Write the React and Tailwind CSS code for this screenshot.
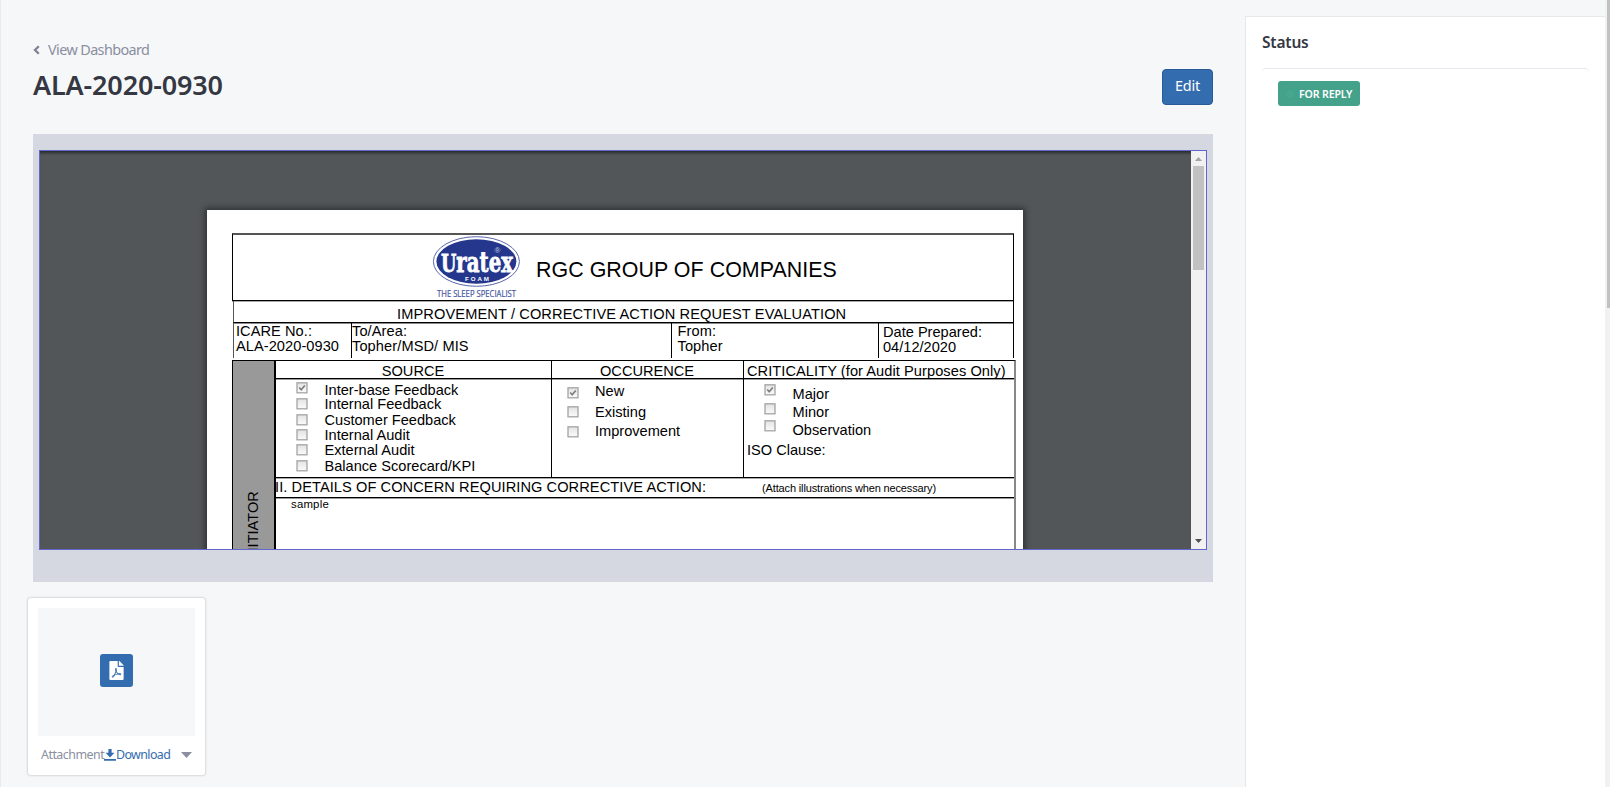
import React from "react";
import { FaFilePdf } from "react-icons/fa";

function Check({ on, className }) {
  return (
    <svg className={"block h-[12px] w-[12px] shrink-0 " + className} viewBox="0 0 12 12">
      <defs>
        <linearGradient id="cb" x1="0" y1="0" x2="0" y2="1">
          <stop offset="0" stopColor="#e2e2e2" />
          <stop offset="1" stopColor="#fbfbfb" />
        </linearGradient>
      </defs>
      <rect x="1" y="0.8" width="10" height="10" fill="url(#cb)" stroke="#a4a4a4" strokeWidth="1.3" />
      {on && <path d="M3.2 5.5 L5.2 7.8 L8.8 3.4" fill="none" stroke="#7c7c7c" strokeWidth="1.6" />}
    </svg>
  );
}

function Logo() {
  return (
    <svg className="block h-[65px] w-[88px] shrink-0 overflow-visible" viewBox="0 0 88 65">
      <ellipse cx="44.4" cy="25.5" rx="43" ry="24.8" fill="#fff" stroke="#5a68ab" strokeWidth="1" />
      <ellipse cx="44.4" cy="25.5" rx="40" ry="22.2" fill="#24378c" />
      <text x="9" y="35.6" textLength="72" lengthAdjust="spacingAndGlyphs" fill="#fff" stroke="#fff" strokeWidth="0.8" fontFamily="DejaVu Serif, serif" fontWeight="700" fontSize="25">U<tspan fontSize="28">ratex</tspan></text>
      <text x="62.4" y="16.8" fill="#c5cbe4" fontFamily="Liberation Sans, sans-serif" fontSize="8">®</text>
      <text x="33" y="45" textLength="24" fill="#fff" fontFamily="Liberation Sans, sans-serif" fontWeight="700" fontSize="6.2">FOAM</text>
      <text x="5" y="60.6" textLength="79" lengthAdjust="spacingAndGlyphs" fill="#4656a0" stroke="#4656a0" strokeWidth="0.2" fontFamily="Open Sans, sans-serif" fontSize="8.8">THE SLEEP SPECIALIST</text>
    </svg>
  );
}

function Report() {
  return (
    <div className="ml-[167px] mt-[59px] h-[500px] w-[816px] shrink-0 bg-white pl-[25px] pt-[23px] font-['Liberation_Sans',Arial,sans-serif] text-[14.6px] leading-[15px] text-black shadow-[0_0_6px_2px_rgba(0,0,0,0.45)]">
      <div className="flex h-[68px] w-[782px] border-x border-b border-t-2 border-black border-t-[#555] pl-[199px] pt-px shadow-[0_1px_0_#aaa]">
        <Logo />
        <div className="pl-[16px] pt-[22px] text-[21.4px] leading-[24px] tracking-[0.04px] whitespace-nowrap">RGC GROUP OF COMPANIES</div>
      </div>
      <div className="ml-px h-[22px] w-[781px] border-b border-l border-r border-black border-l-[#555] pl-[163px] pt-[6px] tracking-[0.12px] whitespace-nowrap shadow-[0_1px_0_#888]">
        IMPROVEMENT / CORRECTIVE ACTION REQUEST EVALUATION
      </div>
      <div className="ml-px flex h-[35px] w-[781px] border-x border-black border-l-[#555]">
        <div className="w-[118px] border-r border-black pl-[2px] pt-px">
          <div className="tracking-[0.06px]">ICARE No.:</div>
          <div className="tracking-[0.06px]">ALA-2020-0930</div>
        </div>
        <div className="w-[320px] border-r border-black pt-px tracking-[0.1px]">
          <div>To/Area:</div>
          <div>Topher/MSD/ MIS</div>
        </div>
        <div className="w-[207px] border-r border-black pl-[5.5px] pt-px tracking-[0.1px]">
          <div>From:</div>
          <div>Topher</div>
        </div>
        <div className="pl-[4px] pt-[2px]">
          <div>Date Prepared:</div>
          <div>04/12/2020</div>
        </div>
      </div>
      <div className="mt-[2px] flex h-[300px] w-[784px] border-l border-r-2 border-t border-black border-r-[#888]">
        <div className="w-[43px] shrink-0 border-r-2 border-black bg-[#999] pl-[12px] pt-[130px]">
          <div className="h-[80px] rotate-180 [writing-mode:vertical-rl] leading-[17px] text-right">INITIATOR</div>
        </div>
        <div className="grow">
          <div className="flex h-[18px] border-b border-black pt-[3px] shadow-[0_1px_0_#999]">
            <div className="w-[276px] pr-[2px] text-center">SOURCE</div>
            <div className="w-[192px] pl-[48px]">OCCURENCE</div>
            <div className="pl-[3px] tracking-[0.07px] whitespace-nowrap">CRITICALITY (for Audit Purposes Only)</div>
          </div>
          <div className="-mt-[18px] flex h-[117px] border-b border-black pt-[18px] shadow-[0_1px_0_#aaa]">
            <div className="-mt-[18px] flex w-[276px] border-r border-black pl-[20px] pt-[21px]">
              <div className="w-[28px]">
                <Check on className="" />
                <Check className="mt-[4px]" />
                <Check className="mt-[4px]" />
                <Check className="mt-[3px]" />
                <Check className="mt-[3px]" />
                <Check className="mt-[4px]" />
              </div>
              <div className="pl-[0.5px] pt-px whitespace-nowrap">
                <div className="h-[14px]">Inter-base Feedback</div>
                <div className="h-[16px]">Internal Feedback</div>
                <div className="h-[15px]">Customer Feedback</div>
                <div className="h-[15px]">Internal Audit</div>
                <div className="h-[16px]">External Audit</div>
                <div>Balance Scorecard/KPI</div>
              </div>
            </div>
            <div className="-mt-[18px] flex w-[192px] border-r border-black pl-[15px] pt-[22px]">
              <div className="w-[28px] pt-[4px]">
                <Check on className="" />
                <Check className="mt-[7px]" />
                <Check className="mt-[8px]" />
              </div>
              <div className="pt-px">
                <div className="h-[21px]">New</div>
                <div className="h-[19px]">Existing</div>
                <div>Improvement</div>
              </div>
            </div>
            <div className="pl-[3px] pt-[8px]">
              <div className="flex pl-[17px]">
                <div className="w-[28.5px]">
                  <Check on className="-mt-[3px]" />
                  <Check className="mt-[7px]" />
                  <Check className="mt-[5px]" />
                </div>
                <div className="h-[56px]">
                  <div className="h-[18px]">Major</div>
                  <div className="h-[18px]">Minor</div>
                  <div>Observation</div>
                </div>
              </div>
              <div>ISO Clause:</div>
            </div>
          </div>
          <div className="flex h-[20px] border-b border-black pt-[2px] whitespace-nowrap shadow-[0_1px_0_#999]">
            <div className="-ml-px w-[487px] tracking-[0.08px]">II. DETAILS OF CONCERN REQUIRING CORRECTIVE ACTION:</div>
            <div className="pt-px text-[11px] tracking-[-0.14px]">(Attach illustrations when necessary)</div>
          </div>
          <div className="-mt-px pl-[15px] text-[11.4px] tracking-[0.2px]">sample</div>
        </div>
      </div>
    </div>
  );
}

function Viewer() {
  return (
    <div className="mt-[29px] h-[448px] bg-[#d5d8e1] px-[6px] pt-[16px]">
      <div className="flex h-[400px] border border-[#6366cc]">
        <div className="grow overflow-hidden bg-[#525659] shadow-[inset_0_4px_3px_-2px_rgba(0,0,0,0.5)]">
          <div className="flex">
            <Report />
          </div>
        </div>
        <div className="flex w-[15px] shrink-0 flex-col items-center justify-between bg-[#f1f1f1]">
          <div>
            <svg className="block h-[15px] w-[15px]" viewBox="0 0 15 15"><path d="M4 10 L7.5 6 L11 10Z" fill="#a3a3a3" /></svg>
            <div className="mx-[2px] h-[104px] w-[11px] bg-[#c1c1c1]" />
          </div>
          <svg className="block h-[15px] w-[15px]" viewBox="0 0 15 15"><path d="M4 5 L7.5 9 L11 5Z" fill="#505050" /></svg>
        </div>
      </div>
    </div>
  );
}

function Attachment() {
  return (
    <div className="-ml-[5px] mt-[16px] h-[177px] w-[177px] rounded-[3px] bg-white p-[10px] shadow-[0_0_2px_1px_rgba(0,0,0,0.13)]">
      <div className="flex h-[128px] items-center justify-center bg-[#f5f7f9] pb-[3px]">
        <div className="flex h-[33px] w-[33px] items-center justify-center rounded-[3px] bg-[#336caf] pr-px text-white">
          <FaFilePdf size={19} />
        </div>
      </div>
      <div className="flex items-center pl-[3px] pt-[9px] text-[12.4px] leading-[20px]">
        <span className="w-[63px] text-[#8b8fa0] tracking-[-0.5px]">Attachment</span>
        <svg className="h-[12px] w-[12px] shrink-0" viewBox="0 0 12 12" fill="#336caf">
          <path d="M4.4 0H7.6V3.8H10.4L6 8.6L1.6 3.8H4.4ZM0 10H12V11.7H0Z" />
        </svg>
        <span className="text-[#336caf] tracking-[-0.6px]">Download</span>
        <svg className="ml-auto mr-[3px] h-[6px] w-[11px] shrink-0" viewBox="0 0 11 6"><path d="M0 0H11L5.5 6Z" fill="#8b8fa0" /></svg>
      </div>
    </div>
  );
}

export default function App() {
  return (
    <div className="flex h-[787px] w-[1610px] overflow-hidden bg-[#f5f7f9] font-['Noto_Sans',sans-serif]">
      <main className="flex w-[1245px] shrink-0 flex-col border-l border-[#e8eaec] pl-[32px] pr-[32px] pt-[40px]">
        <div className="flex h-[20px] items-center text-[14.4px] leading-[20px] text-[#8b8fa0]">
          <svg className="mr-[7px] h-[10px] w-[8px] shrink-0" viewBox="0 0 8 10"><path d="M5.8 1.2 L2 5 L5.8 8.8" fill="none" stroke="#7e8294" strokeWidth="2.3" /></svg>
          <span className="tracking-[-0.6px]">View Dashboard</span>
        </div>
        <div className="mt-[8px] flex items-start justify-between">
          <h1 className="text-[27px] leading-[34px] font-semibold tracking-[-0.15px] text-[#353743]">ALA-2020-0930</h1>
          <button className="mt-px h-[36px] w-[51px] rounded-[4px] border border-[#285a96] bg-[#336caf] pb-[2px] text-[14.4px] leading-none tracking-[-0.2px] text-white">Edit</button>
        </div>
        <Viewer />
        <Attachment />
      </main>
      <aside className="mt-[16px] w-[360px] shrink-0 border-l border-t border-[#e6e8eb] bg-white px-[16px] pt-[13px]">
        <h2 className="h-[38px] text-[15.5px] leading-[24px] font-semibold tracking-[-0.2px] text-[#353743]">Status</h2>
        <div className="rounded-t-[4px] border-t border-[#e6e8ee] px-[16px] pt-[12px]">
          <div className="flex h-[25px] w-[82px] items-center rounded-[3px] bg-[#44a28a] pl-[8px]">
            <span className="mr-[5px] h-[8px] w-[8px] rounded-full bg-[#46a78f]" />
            <span className="pt-px text-[10.6px] leading-none font-semibold tracking-[-0.15px] text-white whitespace-nowrap">FOR REPLY</span>
          </div>
        </div>
      </aside>
      <div className="flex w-[5px] shrink-0 justify-end bg-[#f1f1f1]">
        <div className="h-[308px] w-[3px] bg-[#c1c1c1]" />
      </div>
    </div>
  );
}
